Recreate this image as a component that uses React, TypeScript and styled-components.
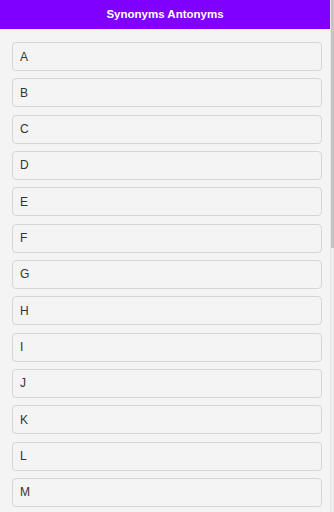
import React from 'react';
import styled, { createGlobalStyle } from 'styled-components';

const letters = 'ABCDEFGHIJKLMNOPQRSTUVWXYZ'.split('');

export default function App() {
  return (
    <>
      <GlobalStyle />
      <Page>
        <Scroller>
          <Header>
            <Title>Synonyms Antonyms</Title>
          </Header>

          <LetterList>
            {letters.map((letter) => (
              <LetterItem key={letter}>{letter}</LetterItem>
            ))}
          </LetterList>
        </Scroller>

        <ScrollTrack>
          <ScrollThumb />
        </ScrollTrack>
      </Page>
    </>
  );
}

const GlobalStyle = createGlobalStyle`
  html, body {
    margin: 0;
    padding: 0;
    height: 100%;
    background: #f4f4f4;
    overflow: hidden;
  }

  #root {
    height: 100%;
  }
`;

const Page = styled.div`
  display: flex;
  height: 100vh;
  background: #f4f4f4;
  font-family: 'Liberation Sans', Arial, sans-serif;
`;

const Scroller = styled.main`
  flex: 1;
  min-width: 0;
  overflow-y: auto;
  scrollbar-width: none;
`;

const ScrollTrack = styled.div`
  width: 4px;
  flex-shrink: 0;
  display: flex;
  justify-content: center;
  background: #efefef;
  border-left: 1px solid #e6e6e6;
  box-sizing: border-box;
`;

const ScrollThumb = styled.div`
  width: 3px;
  height: 248px;
  background: #c4c4c4;
`;

const Header = styled.header`
  height: 29px;
  display: flex;
  align-items: center;
  justify-content: center;
  background: #7f00ff;
`;

const Title = styled.h1`
  margin: 0;
  color: #ffffff;
  font-size: 11.5px;
  font-weight: 700;
  line-height: 1;
`;

const LetterList = styled.ul`
  list-style: none;
  margin: 0;
  padding: 13px 8px 13px 12px;
  display: flex;
  flex-direction: column;
  gap: 7.33px;
`;

const LetterItem = styled.li`
  box-sizing: border-box;
  height: 29px;
  display: flex;
  align-items: center;
  padding: 0 7px;
  background: #f4f4f4;
  border: 1px solid #d6d6d6;
  border-radius: 4px;
  color: #333333;
  font-size: 12px;
`;
